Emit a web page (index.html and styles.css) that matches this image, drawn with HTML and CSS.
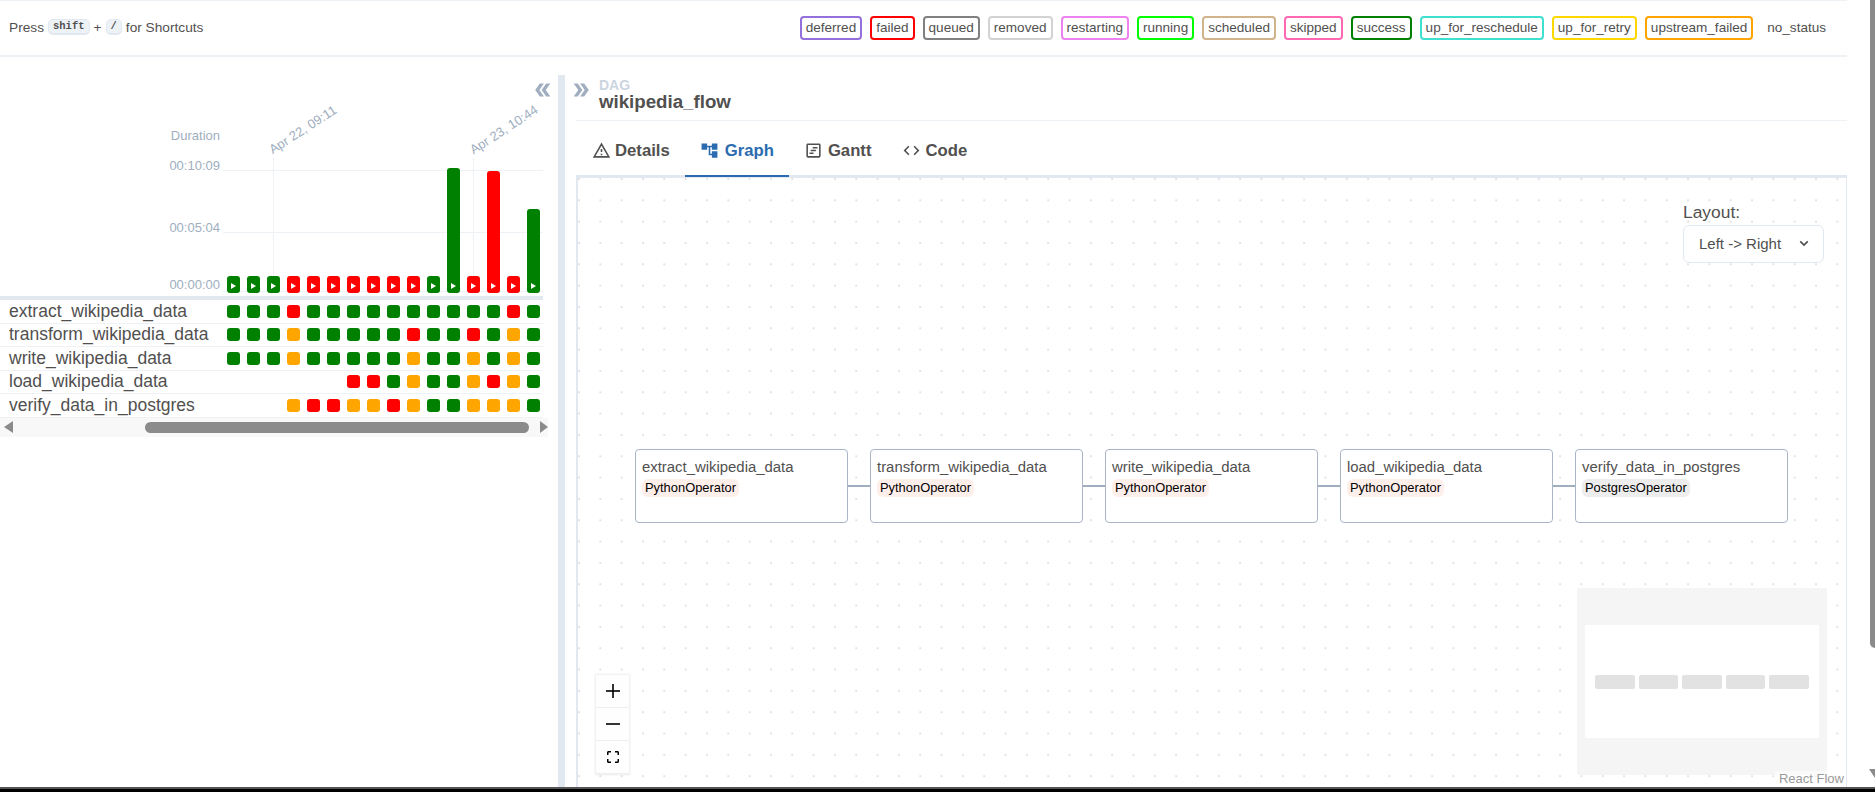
FILE: index.html
```html
<!DOCTYPE html>
<html lang="en">
<head>
    <meta charset="UTF-8">
    <title>wikipedia_flow - Graph</title>
    <link rel="stylesheet" href="styles.css">
</head>
<body>
    <div class="page">
        <div class="content">
            <div class="topbar">
                <div class="shortcuts">
                    <span>Press</span>
                    <kbd class="key">shift</kbd>
                    <span>+</span>
                    <kbd class="key">/</kbd>
                    <span>for Shortcuts</span>
                </div>
                <div class="legend">
                    <span class="badge deferred">deferred</span>
                    <span class="badge failed">failed</span>
                    <span class="badge queued">queued</span>
                    <span class="badge removed">removed</span>
                    <span class="badge restarting">restarting</span>
                    <span class="badge running">running</span>
                    <span class="badge scheduled">scheduled</span>
                    <span class="badge skipped">skipped</span>
                    <span class="badge success">success</span>
                    <span class="badge reschedule">up_for_reschedule</span>
                    <span class="badge retry">up_for_retry</span>
                    <span class="badge upstream">upstream_failed</span>
                    <span class="badge no-status">no_status</span>
                </div>
            </div>

            <div class="main">
                <div class="left-pane">
                    <div class="chart">
                        <svg class="collapse-icon" viewBox="0 0 24 24"><path d="M15.5 5H11l5 7-5 7h4.5l5-7z"/><path d="M8.5 5H4l5 7-5 7h4.5l5-7z"/></svg>
                        <div class="axis-label axis-title">Duration</div>
                        <div class="axis-label axis-max">00:10:09</div>
                        <div class="axis-label axis-mid">00:05:04</div>
                        <div class="axis-label axis-min">00:00:00</div>
                        <div class="gridline grid-max"></div>
                        <div class="gridline grid-mid"></div>
                        <div class="gridline grid-min"></div>
                        <div class="tick tick-a"></div>
                        <div class="tick tick-b"></div>
                        <div class="date-label date-a">Apr 22, 09:11</div>
                        <div class="date-label date-b">Apr 23, 10:44</div>
                        <div class="bars">
                            <span class="bar g"></span>
                            <span class="bar g"></span>
                            <span class="bar g"></span>
                            <span class="bar r"></span>
                            <span class="bar r"></span>
                            <span class="bar r"></span>
                            <span class="bar r"></span>
                            <span class="bar r"></span>
                            <span class="bar r"></span>
                            <span class="bar r"></span>
                            <span class="bar g"></span>
                            <span class="bar g bar-long"></span>
                            <span class="bar r"></span>
                            <span class="bar r bar-tall"></span>
                            <span class="bar r"></span>
                            <span class="bar g bar-mid"></span>
                        </div>
                    </div>
                    <div class="grid-rows">
                        <div class="task-row">
                            <div class="task-name">extract_wikipedia_data</div>
                            <div class="cells">
                                <i class="g"></i><i class="g"></i><i class="g"></i><i class="r"></i><i class="g"></i><i class="g"></i><i class="g"></i><i class="g"></i><i class="g"></i><i class="g"></i><i class="g"></i><i class="g"></i><i class="g"></i><i class="g"></i><i class="r"></i><i class="g"></i>
                            </div>
                        </div>
                        <div class="task-row">
                            <div class="task-name">transform_wikipedia_data</div>
                            <div class="cells">
                                <i class="g"></i><i class="g"></i><i class="g"></i><i class="o"></i><i class="g"></i><i class="g"></i><i class="g"></i><i class="g"></i><i class="g"></i><i class="r"></i><i class="g"></i><i class="g"></i><i class="r"></i><i class="g"></i><i class="o"></i><i class="g"></i>
                            </div>
                        </div>
                        <div class="task-row">
                            <div class="task-name">write_wikipedia_data</div>
                            <div class="cells">
                                <i class="g"></i><i class="g"></i><i class="g"></i><i class="o"></i><i class="g"></i><i class="g"></i><i class="g"></i><i class="g"></i><i class="g"></i><i class="o"></i><i class="g"></i><i class="g"></i><i class="o"></i><i class="g"></i><i class="o"></i><i class="g"></i>
                            </div>
                        </div>
                        <div class="task-row">
                            <div class="task-name">load_wikipedia_data</div>
                            <div class="cells">
                                <i></i><i></i><i></i><i></i><i></i><i></i><i class="r"></i><i class="r"></i><i class="g"></i><i class="o"></i><i class="g"></i><i class="g"></i><i class="o"></i><i class="r"></i><i class="o"></i><i class="g"></i>
                            </div>
                        </div>
                        <div class="task-row">
                            <div class="task-name">verify_data_in_postgres</div>
                            <div class="cells">
                                <i></i><i></i><i></i><i class="o"></i><i class="r"></i><i class="r"></i><i class="o"></i><i class="o"></i><i class="r"></i><i class="o"></i><i class="g"></i><i class="g"></i><i class="o"></i><i class="o"></i><i class="o"></i><i class="g"></i>
                            </div>
                        </div>
                    </div>
                    <div class="hscroll">
                        <span class="arrow-left"></span>
                        <span class="hthumb"></span>
                        <span class="arrow-right"></span>
                    </div>
                </div>

                <div class="divider"></div>

                <div class="right-pane">
                    <div class="dag-head">
                        <svg class="expand-icon" viewBox="0 0 24 24"><path d="M15.5 5H11l5 7-5 7h4.5l5-7z"/><path d="M8.5 5H4l5 7-5 7h4.5l5-7z"/></svg>
                        <div class="dag-title">
                            <div class="dag-kicker">DAG</div>
                            <div class="dag-name">wikipedia_flow</div>
                        </div>
                    </div>

                    <div class="tabs">
                        <div class="tab">
                            <svg class="tab-icon" viewBox="0 0 24 24"><path d="M12 5.99L19.53 19H4.47L12 5.99M12 2L1 21h22L12 2zm1 14h-2v2h2v-2zm0-6h-2v4h2v-4z"/></svg>
                            Details
                        </div>
                        <div class="tab active">
                            <svg class="tab-icon" viewBox="0 0 24 24"><path d="M22 11V3h-7v3H9V3H2v8h7V8h2v10h4v3h7v-8h-7v3h-2V8h2v3z"/></svg>
                            Graph
                        </div>
                        <div class="tab">
                            <svg class="tab-icon" viewBox="0 0 24 24"><path d="M19 3H5c-1.1 0-2 .9-2 2v14c0 1.100.9 2 2 2h14c1.100 0 2-.9 2-2V5c0-1.100-.9-2-2-2zm0 16H5V5h14v14z"/><path d="M11 7.500h6v2h-6zM8.500 11h6.500v2H8.500zM7 14.500h5v2H7z"/></svg>
                            Gantt
                        </div>
                        <div class="tab">
                            <svg class="tab-icon" viewBox="0 0 24 24"><path d="M9.400 16.600L4.800 12l4.600-4.600L8 6l-6 6 6 6 1.400-1.400zm5.200 0l4.600-4.600-4.600-4.600L16 6l6 6-6 6-1.400-1.400z"/></svg>
                            Code
                        </div>
                    </div>

                    <div class="canvas">
                        <div class="layout-picker">
                            <div class="layout-label">Layout:</div>
                            <div class="layout-select">
                                <span>Left -&gt; Right</span>
                                <svg class="select-chevron" viewBox="0 0 12 8"><path d="M1.500 1.500L6 6l4.500-4.500"/></svg>
                            </div>
                        </div>

                        <div class="flow">
                            <div class="node">
                                <div class="node-name">extract_wikipedia_data</div>
                                <span class="op python">PythonOperator</span>
                            </div>
                            <div class="edge"></div>
                            <div class="node">
                                <div class="node-name">transform_wikipedia_data</div>
                                <span class="op python">PythonOperator</span>
                            </div>
                            <div class="edge"></div>
                            <div class="node">
                                <div class="node-name">write_wikipedia_data</div>
                                <span class="op python">PythonOperator</span>
                            </div>
                            <div class="edge"></div>
                            <div class="node">
                                <div class="node-name">load_wikipedia_data</div>
                                <span class="op python">PythonOperator</span>
                            </div>
                            <div class="edge"></div>
                            <div class="node">
                                <div class="node-name">verify_data_in_postgres</div>
                                <span class="op postgres">PostgresOperator</span>
                            </div>
                        </div>

                        <div class="zoom-controls">
                            <div class="zoom-btn">
                                <svg viewBox="0 0 16 16"><path d="M7.200 1h1.600v14H7.200z"/><path d="M1 7.200h14v1.600H1z"/></svg>
                            </div>
                            <div class="zoom-btn">
                                <svg viewBox="0 0 16 16"><path d="M1 7.200h14v1.600H1z"/></svg>
                            </div>
                            <div class="zoom-btn">
                                <svg viewBox="0 0 16 16"><path d="M2 6V3.500C2 2.700 2.700 2 3.500 2H6v1.500H3.500V6zM10 2h2.500c.8 0 1.500.7 1.500 1.500V6h-1.500V3.500H10zM14 10v2.500c0 .8-.7 1.500-1.500 1.500H10v-1.500h2.500V10zM6 14H3.500C2.700 14 2 13.300 2 12.500V10h1.500v2.500H6z"/></svg>
                            </div>
                        </div>

                        <svg class="minimap" viewBox="0 0 250 187">
                            <rect class="mini-view" x="8" y="37" width="234" height="113"/>
                            <rect class="mini-node" x="18" y="87" width="40" height="14" rx="2"/>
                            <rect class="mini-node" x="62" y="87" width="39" height="14" rx="2"/>
                            <rect class="mini-node" x="105" y="87" width="40" height="14" rx="2"/>
                            <rect class="mini-node" x="149" y="87" width="39" height="14" rx="2"/>
                            <rect class="mini-node" x="192" y="87" width="40" height="14" rx="2"/>
                        </svg>

                        <div class="attribution">React Flow</div>
                    </div>
                </div>
            </div>
        </div>

        <div class="vscroll">
            <span class="vthumb"></span>
            <span class="arrow-down"></span>
        </div>
    </div>
    <div class="screen-edge"></div>
</body>
</html>
```

FILE: styles.css
```css
body {
    margin: 0;
    height: 792px;
    display: flex;
    flex-direction: column;
    overflow: hidden;
    font-family: "Liberation Sans", Arial, sans-serif;
    color: #51504f;
    background-color: white;
}

.page {
    flex: 1;
    min-height: 0;
    display: flex;
}

.content {
    width: 1847px;
    flex-shrink: 0;
    display: flex;
    flex-direction: column;
}

.screen-edge {
    height: 3px;
    border-top: 2px solid #555;
    background-color: black;
}

/* top bar */
.topbar {
    height: 54px;
    box-sizing: content-box;
    border-top: 1px solid #edf2f7;
    border-bottom: 2px solid #edf2f7;
    display: flex;
    align-items: center;
    justify-content: space-between;
    padding: 0 15px 0 9px;
    font-size: 13.55px;
}

.shortcuts {
    display: flex;
    align-items: center;
    gap: 4px;
    margin-top: -2px;
    font-size: 13.7px;
}

.key {
    font-family: "Liberation Mono", monospace;
    font-size: 10.5px;
    font-weight: bold;
    line-height: 13px;
    padding: 0 4px;
    background-color: #edf2f7;
    border: 1px solid #e2e8f0;
    border-bottom-width: 2px;
    border-radius: 5px;
}

.legend {
    display: flex;
    gap: 8px;
}

.badge {
    line-height: 20px;
    padding: 0 4px;
    border: 2px solid;
    border-radius: 4px;
}

.deferred { border-color: #9370db; }
.failed { border-color: #ff0000; }
.queued { border-color: #808080; }
.removed { border-color: #d3d3d3; }
.restarting { border-color: #ee82ee; }
.running { border-color: #00ff00; }
.scheduled { border-color: #d2b48c; }
.skipped { border-color: #ff69b4; }
.success { border-color: #008000; }
.reschedule { border-color: #40e0d0; }
.retry { border-color: #ffd700; }
.upstream { border-color: #ffa500; }
.no-status { border-color: transparent; }

.main {
    flex: 1;
    min-height: 0;
    display: flex;
    padding-top: 18px;
}

/* left side */
.left-pane {
    width: 558px;
    flex-shrink: 0;
}

.chart {
    position: relative;
    height: 218px;
    padding-bottom: 3px;
    display: flex;
    align-items: flex-end;
    border-bottom: 4px solid #e2e8f0;
    width: 543px;
}

.collapse-icon {
    position: absolute;
    left: 532px;
    top: 4px;
    width: 22px;
    height: 22px;
    fill: #a0aec0;
    transform: scaleX(-1);
}

.axis-label {
    position: absolute;
    left: 160px;
    width: 60px;
    text-align: right;
    font-size: 13px;
    line-height: 16px;
    color: #a0aec0;
}

.axis-title { top: 53px; }
.axis-max { top: 83px; }
.axis-mid { top: 145px; }
.axis-min { top: 202px; }

.gridline {
    position: absolute;
    left: 223px;
    width: 320px;
    height: 1px;
    background-color: #edf2f7;
}

.grid-max { top: 95px; }
.grid-mid { top: 157px; }
.grid-min { top: 216px; }

.tick {
    position: absolute;
    top: 83px;
    width: 1px;
    height: 133px;
    background-color: #edf2f7;
}

.tick-a { left: 273px; }
.tick-b { left: 473px; }

.date-label {
    position: absolute;
    top: 47px;
    width: 90px;
    text-align: center;
    font-size: 13px;
    line-height: 16px;
    color: #a0aec0;
    transform: rotate(-33deg);
}

.date-a { left: 258px; }
.date-b { left: 459px; }

.bars {
    position: relative;
    margin-left: 227px;
    display: flex;
    align-items: flex-end;
    gap: 7px;
}

.bar {
    position: relative;
    width: 13px;
    height: 17px;
    border-radius: 3px;
}

.bar::after {
    content: "";
    position: absolute;
    left: 4px;
    bottom: 4px;
    border-left: 5px solid white;
    border-top: 3px solid transparent;
    border-bottom: 3px solid transparent;
}

.bar-long { height: 125px; }
.bar-tall { height: 122px; }
.bar-mid { height: 84px; }

.g { background-color: #008000; }
.r { background-color: #ff0000; }
.o { background-color: #ffa500; }

.grid-rows {
    width: 543px;
}

.task-row {
    height: 22.5px;
    border-bottom: 1px solid #edf2f7;
    display: flex;
    align-items: center;
    justify-content: space-between;
    padding-left: 9px;
}

.task-name {
    font-size: 17.5px;
}

.cells {
    display: flex;
    gap: 7px;
    padding-right: 3px;
}

.cells i {
    width: 13px;
    height: 13px;
    border-radius: 3px;
}

.hscroll {
    width: 548px;
    height: 19px;
    display: flex;
    align-items: center;
    background-color: #f8f8f8;
}

.arrow-left {
    margin-left: 4px;
    border-right: 9px solid #8b8b8b;
    border-top: 6px solid transparent;
    border-bottom: 6px solid transparent;
}

.hthumb {
    margin-left: 132px;
    width: 384px;
    height: 11px;
    border-radius: 6px;
    background-color: #8b8b8b;
}

.arrow-right {
    margin-left: 11px;
    border-left: 8px solid #8b8b8b;
    border-top: 6px solid transparent;
    border-bottom: 6px solid transparent;
}

.divider {
    width: 7px;
    flex-shrink: 0;
    background-color: #e2e8f0;
}

/* right side */
.right-pane {
    flex: 1;
    min-width: 0;
    display: flex;
    flex-direction: column;
    padding-left: 11px;
}

.dag-head {
    height: 45px;
    border-bottom: 1px solid #edf2f7;
    display: flex;
}

.expand-icon {
    width: 22px;
    height: 22px;
    margin: 4px 7px 0 -6px;
    fill: #a0aec0;
}

.dag-kicker {
    font-size: 14px;
    line-height: 14px;
    margin-top: 3px;
    font-weight: bold;
    color: #cbd5e0;
}

.dag-name {
    font-size: 18.7px;
    line-height: 22px;
    margin-top: -1px;
    font-weight: bold;
}

.tabs {
    height: 54px;
    display: flex;
    border-bottom: 3px solid #e2e8f0;
}

.tab {
    height: 49px;
    box-sizing: content-box;
    display: flex;
    align-items: center;
    gap: 4px;
    padding: 5px 15px 0;
    font-size: 16.7px;
    font-weight: bold;
    border-bottom: 2px solid transparent;
    margin-bottom: -3px;
}

.tab:first-child {
    padding-left: 16px;
}

.tab:nth-child(3) {
    gap: 5px;
    padding-right: 16px;
}

.tab.active {
    gap: 6px;
    color: #2b6cb0;
    border-bottom-color: #2b6cb0;
}

.tab-icon {
    width: 19px;
    height: 19px;
    fill: currentColor;
}

.canvas {
    position: relative;
    flex: 1;
    min-height: 0;
    overflow: hidden;
    border-left: 2px solid #e2e8f0;
    border-right: 1px solid #e2e8f0;
    background-image: radial-gradient(circle, #b4b4ba 0.5px, transparent 0.8px);
    background-size: 21.33px 21.33px;
    background-position: -9.67px -9.67px;
}

.layout-picker {
    position: absolute;
    left: 1105px;
    top: 24px;
}

.layout-label {
    font-size: 17.4px;
    line-height: 20px;
    margin-bottom: 3px;
}

.layout-select {
    width: 141px;
    height: 38px;
    box-sizing: border-box;
    border: 1px solid #e2e8f0;
    border-radius: 6px;
    background-color: white;
    display: flex;
    align-items: center;
    justify-content: space-between;
    padding: 0 14px 1px 15px;
    font-size: 15px;
}

.select-chevron {
    width: 10px;
    height: 7px;
    fill: none;
    stroke: #51504f;
    stroke-width: 2;
}

.flow {
    position: absolute;
    left: 57px;
    top: 271px;
    display: flex;
    align-items: center;
}

.node {
    width: 213px;
    height: 74px;
    box-sizing: border-box;
    border: 1px solid #aab6c8;
    border-radius: 4px;
    background-color: white;
    padding: 8px 6px 0;
}

.node-name {
    font-size: 14.9px;
    line-height: 18px;
    margin-bottom: 2px;
}

.op {
    display: inline-block;
    font-size: 12.9px;
    line-height: 18px;
    padding: 0 3px;
    border-radius: 6px;
    color: black;
}

.python { background-color: #ffefeb; }
.postgres { background-color: #ededed; }

.edge {
    width: 22px;
    height: 2px;
    background-color: #a0aec0;
}

.zoom-controls {
    position: absolute;
    left: 18px;
    top: 497px;
    width: 33px;
    box-shadow: 0 0 2px 1px rgba(0, 0, 0, 0.08);
}

.zoom-btn {
    height: 33px;
    box-sizing: border-box;
    background-color: #fefefe;
    border-bottom: 1px solid #eee;
    display: flex;
    align-items: center;
    justify-content: center;
}

.zoom-btn svg {
    width: 16px;
    height: 16px;
    fill: black;
}

.minimap {
    position: absolute;
    left: 999px;
    top: 410px;
    width: 250px;
    height: 187px;
    background-color: #f5f5f5;
}

.mini-view {
    fill: white;
}

.mini-node {
    fill: #e2e2e2;
}

.attribution {
    position: absolute;
    right: 0;
    bottom: 0;
    padding: 0 2px 0 4px;
    font-size: 13px;
    line-height: 16px;
    color: #999;
    background-color: rgba(255, 255, 255, 0.5);
}

.vscroll {
    flex: 1;
    display: flex;
    flex-direction: column;
    align-items: flex-end;
    justify-content: space-between;
    padding-bottom: 9px;
}

.vthumb {
    width: 5px;
    height: 648px;
    border-bottom-left-radius: 5px;
    background-color: #8b8b8b;
}

.arrow-down {
    width: 0;
    height: 0;
    border-left: 6px solid transparent;
    border-top: 9px solid #8b8b8b;
}
```
